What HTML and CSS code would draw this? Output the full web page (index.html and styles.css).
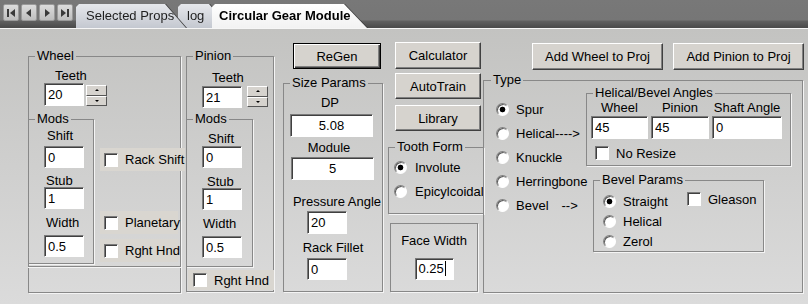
FILE: index.html
```html
<!DOCTYPE html>
<html lang="en">
<head>
    <meta charset="UTF-8">
    <title>Circular Gear Module</title>
    <link rel="stylesheet" href="styles.css">
</head>
<body>
    <div class="tabbar">
        <div class="navs">
            <span class="nav"><svg width="8" height="8" viewBox="0 0 8 8"><rect x="0" y="0" width="2" height="8"/><path d="M8 0V8L3 4Z"/></svg></span>
            <span class="nav"><svg width="8" height="8" viewBox="0 0 8 8"><path d="M6 0V8L1 4Z"/></svg></span>
            <span class="nav"><svg width="8" height="8" viewBox="0 0 8 8"><path d="M2 0V8L7 4Z"/></svg></span>
            <span class="nav"><svg width="8" height="8" viewBox="0 0 8 8"><path d="M0 0V8L5 4Z"/><rect x="6" y="0" width="2" height="8"/></svg></span>
        </div>
        <div class="tab tab-props"><span>Selected Props</span></div>
        <div class="tab tab-log"><span>log</span></div>
        <div class="tab tab-active"><span>Circular Gear Module</span></div>
    </div>

    <div class="form">
        <!-- wheel -->
        <fieldset class="grp wheel">
            <legend>Wheel</legend>
            <div class="lbl wheel-teeth">Teeth</div>
            <div class="spinrow wheel-spinrow">
                <input class="field teeth" value="20">
                <div class="spin wheel-spin"><span class="up"></span><span class="dn"></span></div>
            </div>
            <div class="modsrow wheel-modsrow">
                <fieldset class="grp mods wheel-mods">
                    <legend>Mods</legend>
                    <div class="lbl wm-shift">Shift</div>
                    <input class="field small wm-shift-in" value="0">
                    <div class="lbl wm-stub">Stub</div>
                    <input class="field small wm-stub-in" value="1">
                    <div class="lbl wm-width">Width</div>
                    <input class="field small wm-width-in" value="0.5">
                </fieldset>
                <div class="checks">
                    <label class="chk lit rack"><span class="box"></span>Rack Shift</label>
                    <label class="chk lit planet"><span class="box"></span>Planetary</label>
                    <label class="chk lit w-rght"><span class="box"></span>Rght Hnd</label>
                </div>
            </div>
            <div class="divider"></div>
        </fieldset>

        <!-- pinion -->
        <fieldset class="grp pinion">
            <legend>Pinion</legend>
            <div class="lbl pinion-teeth">Teeth</div>
            <div class="spinrow pinion-spinrow">
                <input class="field teeth" value="21">
                <div class="spin pinion-spin"><span class="up"></span><span class="dn"></span></div>
            </div>
            <fieldset class="grp mods pinion-mods">
                <legend>Mods</legend>
                <div class="lbl pm-shift">Shift</div>
                <input class="field small pm-shift-in" value="0">
                <div class="lbl pm-stub">Stub</div>
                <input class="field small pm-stub-in" value="1">
                <div class="lbl pm-width">Width</div>
                <input class="field small pm-width-in" value="0.5">
            </fieldset>
            <label class="chk lit p-rght"><span class="box"></span>Rght Hnd</label>
        </fieldset>

        <!-- size params -->
        <div class="col-size">
            <button class="btn default regen">ReGen</button>
            <fieldset class="grp size">
                <legend>Size Params</legend>
                <div class="lbl dp-lbl">DP</div>
                <input class="field dp-in" value="5.08">
                <div class="lbl mod-lbl">Module</div>
                <input class="field mod-in" value="5">
                <div class="lbl pa-lbl">Pressure Angle</div>
                <input class="field pa-in" value="20">
                <div class="lbl rf-lbl">Rack Fillet</div>
                <input class="field rf-in" value="0">
            </fieldset>
        </div>

        <!-- tools -->
        <div class="col-tools">
            <button class="btn tool calc">Calculator</button>
            <button class="btn tool autotrain">AutoTrain</button>
            <button class="btn tool library">Library</button>
            <fieldset class="grp tooth">
                <legend>Tooth Form</legend>
                <label class="radio-item"><span class="radio on"></span>Involute</label>
                <label class="radio-item"><span class="radio"></span>Epicylcoidal</label>
            </fieldset>
            <div class="face">
                <div class="lbl">Face Width</div>
                <div class="field face-in">0.25<span class="caret"></span></div>
            </div>
        </div>

        <!-- type -->
        <div class="col-type">
            <div class="addrow">
                <button class="btn add">Add Wheel to Proj</button>
                <button class="btn add">Add Pinion to Proj</button>
            </div>
            <fieldset class="grp type">
                <legend>Type</legend>
                <div class="typebody">
                    <div class="types">
                        <label class="radio-item"><span class="radio on"></span>Spur</label>
                        <label class="radio-item"><span class="radio"></span><span>Helical----&gt;</span></label>
                        <label class="radio-item"><span class="radio"></span>Knuckle</label>
                        <label class="radio-item"><span class="radio"></span>Herringbone</label>
                        <label class="radio-item"><span class="radio"></span><span>Bevel<span class="bevel-arrow">--&gt;</span></span></label>
                    </div>
                    <div class="angles-col">
                        <fieldset class="grp angles">
                            <legend>Helical/Bevel Angles</legend>
                            <div class="angle-grid">
                                <div class="lbl">Wheel</div>
                                <div class="lbl">Pinion</div>
                                <div class="lbl">Shaft Angle</div>
                                <input class="field" value="45">
                                <input class="field" value="45">
                                <input class="field" value="0">
                            </div>
                            <label class="chk noresize"><span class="box"></span>No Resize</label>
                        </fieldset>
                        <fieldset class="grp bevel">
                            <legend>Bevel Params</legend>
                            <div class="bevelbody">
                                <div class="bevel-radios">
                                    <label class="radio-item"><span class="radio on"></span>Straight</label>
                                    <label class="radio-item"><span class="radio"></span>Helical</label>
                                    <label class="radio-item"><span class="radio"></span>Zerol</label>
                                </div>
                                <label class="chk gleason"><span class="box"></span>Gleason</label>
                            </div>
                        </fieldset>
                    </div>
                </div>
            </fieldset>
        </div>
    </div>
</body>
</html>
```

FILE: styles.css
```css
* {
    box-sizing: border-box;
}
body {
    margin: 0;
    width: 808px;
    height: 304px;
    overflow: hidden;
    font-family: "Liberation Sans", Arial, sans-serif;
    font-size: 13px;
    color: #000;
    background: #c3c3c1;
}

/* tab strip */
.tabbar {
    display: flex;
    align-items: flex-end;
    height: 29px;
    padding-left: 3px;
    background: linear-gradient(#787878 0, #767676 20px, #606060 21px, #4c4c4c 27px);
    border-bottom: 1px solid #f6f6f6;
}
.navs {
    display: flex;
    gap: 2px;
    align-self: flex-start;
    margin: 4px 3px 0 0;
}
.nav {
    width: 16px;
    height: 17px;
    display: flex;
    align-items: center;
    justify-content: center;
    background: linear-gradient(#dcdcdc, #bebebe);
    border: 1px solid #9a9a9a;
    border-radius: 2px;
    fill: #3a3a3a;
}
.tab {
    height: 24px;
    flex-shrink: 0;
    filter: drop-shadow(1px 0 0 #3a3a3a);
}
.tab span {
    display: block;
    height: 100%;
    line-height: 24px;
    white-space: nowrap;
    color: #1e1e1e;
    background: linear-gradient(#e6e8ec, #c4c8d0);
}
.tab-props {
    width: 110px;
    z-index: 2;
}
.tab-props span {
    padding-left: 10px;
    clip-path: polygon(0 3px, 3px 0, 89px 0, 100% 100%, 0 100%);
}
.tab-log {
    width: 52px;
    margin-left: -8px;
    z-index: 1;
}
.tab-log span {
    padding-left: 9px;
    clip-path: polygon(0 3px, 3px 0, 31px 0, 100% 100%, 0 100%);
}
.tab-active {
    width: 155px;
    margin-left: -18px;
    z-index: 3;
}
.tab-active span {
    padding-left: 7px;
    font-weight: bold;
    color: #000;
    background: linear-gradient(#ffffff, #f2f2f2);
    clip-path: polygon(0 3px, 3px 0, 132px 0, 100% 100%, 0 100%);
}

/* form body */
.form {
    display: flex;
    align-items: flex-start;
    height: 275px;
    padding: 13px 0 0 28px;
    background: linear-gradient(#c3c3c1, #dbdbdb);
}
.grp {
    margin: 0;
    padding: 0;
    min-width: 0;
    flex-shrink: 0;
    border: 1px solid #888;
    box-shadow: 1px 1px 0 #f4f4f4;
}
.grp > legend {
    margin-left: 6px;
    padding: 0 2px;
    line-height: 14px;
}
.lbl {
    line-height: 15px;
    white-space: nowrap;
}
.field {
    display: block;
    height: 22px;
    padding: 0 3px;
    font: inherit;
    color: #000;
    background: #fff;
    border: 1px solid;
    border-color: #7a7a7a #fff #fff #7a7a7a;
    box-shadow: inset 1px 1px 0 #404040;
    outline: none;
}
.field.small {
    width: 40px;
    margin-left: 15px;
}
.btn {
    display: block;
    padding: 0;
    font: inherit;
    color: #000;
    background: #d6d3ce;
    border: 1px solid;
    border-color: #fff #404040 #404040 #fff;
    box-shadow: inset -1px -1px 0 #808080;
    flex-shrink: 0;
}
.btn.default {
    border-color: #000;
    box-shadow: inset 1px 1px 0 #fff, inset -1px -1px 0 #404040, inset -2px -2px 0 #808080;
}
.box {
    width: 14px;
    height: 14px;
    flex-shrink: 0;
    background: #fff;
    border: 1px solid;
    border-color: #7a7a7a #fff #fff #7a7a7a;
    box-shadow: inset 1px 1px 0 #404040;
}
.chk {
    display: flex;
    align-items: center;
    gap: 7px;
    height: 23px;
    padding-left: 4px;
    white-space: nowrap;
    flex-shrink: 0;
}
.chk.lit {
    background: #d9d6d0;
}
.radio-item {
    display: flex;
    align-items: center;
    height: 24px;
    white-space: nowrap;
}
.radio {
    width: 13px;
    height: 13px;
    flex-shrink: 0;
    border-radius: 50%;
    background: #fff;
    border: 1px solid;
    border-color: #808080 #fff #fff #808080;
    box-shadow: inset 1px 1px 0 #5a5a5a;
}
.radio.on {
    background: radial-gradient(circle, #000 0 2.5px, #fff 3.2px);
}

/* spinner */
.spinrow {
    display: flex;
    align-items: flex-start;
}
.teeth {
    width: 40px;
}
.spin {
    display: flex;
    flex-direction: column;
    width: 21px;
    height: 21px;
}
.spin span {
    flex: 1;
    display: flex;
    align-items: center;
    justify-content: center;
    background: #d6d3ce;
    border: 1px solid;
    border-color: #fff #555 #555 #fff;
}
.spin span::after {
    content: "";
    border-left: 2px solid transparent;
    border-right: 2px solid transparent;
}
.spin .up::after {
    border-bottom: 2px solid #000;
}
.spin .dn::after {
    border-top: 2px solid #000;
}

/* wheel */
.wheel {
    margin-top: 7px;
    width: 153px;
}
.wheel-teeth {
    margin-top: 5px;
    padding-left: 26px;
}
.wheel-spinrow {
    margin-left: 15px;
}
.wheel .teeth {
    height: 23px;
}
.wheel-spin {
    margin: 2px 0 0 2px;
}
.modsrow {
    display: flex;
    align-items: flex-start;
}
.wheel-modsrow {
    margin-top: 6px;
}
.mods {
    margin-left: -1px;
}
.wheel-mods {
    width: 66px;
    padding-bottom: 6px;
}
.wm-shift { margin-top: 2px; padding-left: 18px; }
.wm-shift-in { margin-top: 3px; }
.wm-stub { margin-top: 5px; padding-left: 17px; }
.wm-stub-in { margin-top: -1px; }
.wm-width { margin-top: 6px; padding-left: 17px; }
.wm-width-in { margin-top: 5px; }
.checks {
    display: flex;
    flex-direction: column;
    align-items: flex-start;
    margin-left: 6px;
    flex-shrink: 0;
}
.rack { margin-top: 36px; width: 85px; }
.planet { margin-top: 40px; width: 78px; }
.w-rght { margin-top: 5px; width: 78px; }
.divider {
    margin: 2px -1px 0;
    height: 26px;
    border-top: 1px solid #888;
    box-shadow: inset 0 1px 0 #f4f4f4;
}

/* pinion */
.pinion {
    margin: 7px 0 0 5px;
    width: 88px;
    padding-bottom: 1px;
}
.pinion-teeth {
    margin-top: 7px;
    padding-left: 25px;
}
.pinion-spinrow {
    margin: 1px 0 0 15px;
}
.pinion-spin {
    margin-left: 5px;
}
.pinion-mods {
    width: 67px;
    margin-top: 4px;
    padding-bottom: 8px;
}
.pm-shift { margin-top: 5px; padding-left: 21px; }
.pm-stub { margin-top: 6px; padding-left: 20px; }
.pm-stub-in { margin-top: -1px; }
.pm-width { margin-top: 6px; padding-left: 16px; }
.pm-width-in { margin-top: 5px; }
.p-rght {
    margin: 3px 0 0 1px;
    width: 86px;
    height: 20px;
    padding-left: 5px;
}

/* size params */
.col-size {
    margin-left: 9px;
    width: 100px;
    flex-shrink: 0;
}
.regen {
    margin: 1px 0 0 10px;
    width: 88px;
    height: 26px;
}
.size {
    margin-top: 7px;
    width: 100px;
    padding-bottom: 11px;
}
.dp-lbl { margin-top: 5px; text-align: center; padding-right: 6px; }
.dp-in { margin: 4px 0 0 6px; width: 83px; height: 23px; text-align: center; }
.mod-lbl { margin-top: 3px; text-align: center; padding-right: 8px; }
.mod-in { margin: 2px 0 0 7px; width: 83px; height: 23px; text-align: center; }
.pa-lbl { margin-top: 14px; text-align: center; padding-left: 8px; }
.pa-in { margin: 2px 0 0 23px; width: 40px; height: 23px; }
.rf-lbl { margin-top: 6px; text-align: center; }
.rf-in { margin: 3px 0 0 23px; width: 40px; height: 22px; }

/* tools column */
.col-tools {
    margin-left: 5px;
    width: 96px;
    flex-shrink: 0;
}
.tool {
    margin-left: 7px;
    width: 86px;
    height: 26px;
}
.calc { height: 27px; }
.autotrain { margin-top: 4px; }
.library { margin-top: 6px; }
.tooth {
    margin-top: 9px;
    width: 96px;
    padding: 1px 0 10px;
}
.tooth .radio-item {
    padding-left: 5px;
    gap: 8px;
}
.face {
    margin: 9px 0 0 2px;
    width: 88px;
    padding: 9px 0 11px;
    border: 1px solid #888;
    box-shadow: 1px 1px 0 #f4f4f4;
    text-align: center;
}
.face-in {
    margin: 10px auto 0;
    width: 39px;
    line-height: 20px;
    text-align: left;
}
.caret {
    display: inline-block;
    width: 1px;
    height: 15px;
    margin-left: 1px;
    vertical-align: -3px;
    background: #000;
}

/* type column */
.col-type {
    margin-left: -1px;
    width: 320px;
    flex-shrink: 0;
}
.addrow {
    display: flex;
    margin: 1px 0 0 49px;
}
.add {
    width: 131px;
    height: 27px;
}
.add + .add {
    margin-left: 10px;
}
.type {
    margin-top: 3px;
    width: 320px;
}
.type > legend {
    margin-left: 7px;
}
.typebody {
    display: flex;
    align-items: flex-start;
    height: 205px;
}
.types {
    width: 102px;
    padding-top: 10px;
    flex-shrink: 0;
}
.types .radio-item {
    padding-left: 12px;
    gap: 7px;
}
.bevel-arrow {
    margin-left: 13px;
}
.angles-col {
    margin-top: -1px;
}
.angles {
    width: 205px;
    padding-bottom: 1px;
}
.angle-grid {
    display: grid;
    grid-template-columns: 57px 58px 70px;
    column-gap: 3px;
    padding-left: 4px;
}
.angle-grid .lbl {
    text-align: center;
}
.angle-grid .field {
    width: 100%;
    height: 23px;
    margin-top: 1px;
}
.noresize {
    margin: 3px 0 0 3px;
    height: 22px;
    padding-left: 5px;
}
.bevel {
    margin: 7px 0 0 7px;
    width: 171px;
}
.bevelbody {
    display: flex;
    align-items: flex-start;
}
.bevel-radios {
    width: 89px;
    padding-top: 4px;
    flex-shrink: 0;
}
.bevel .radio-item {
    height: 20px;
    padding-left: 9px;
    gap: 7px;
}
.gleason {
    margin-top: 2px;
    height: 20px;
}
```
